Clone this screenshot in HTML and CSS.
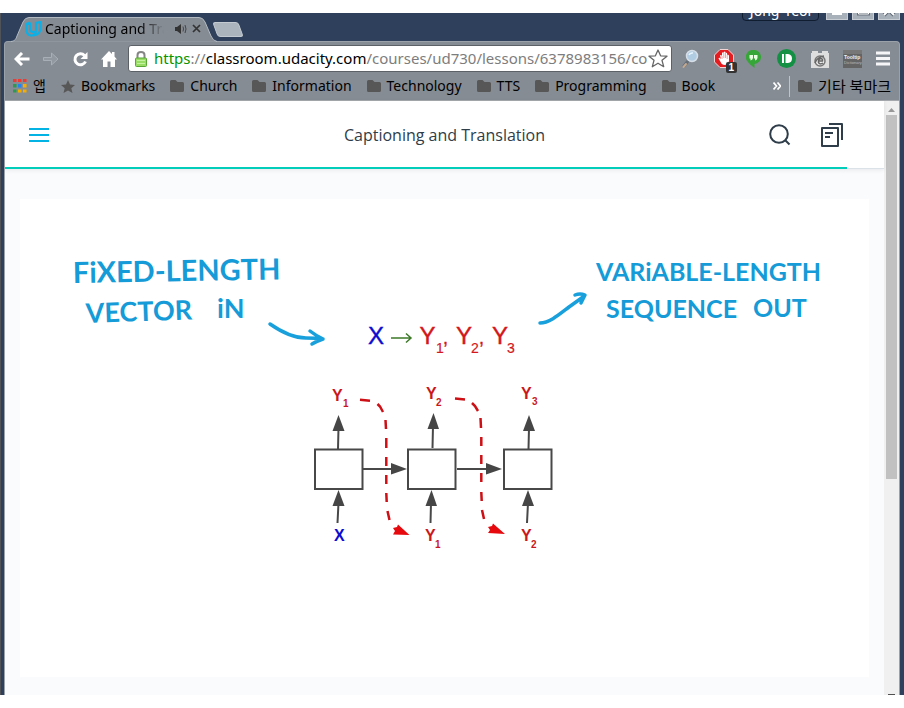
FILE: index.html
```html
<!DOCTYPE html>
<html lang="en">
<head>
<meta charset="utf-8">
<title>Captioning and Translation</title>
<meta name="viewport" content="width=device-width">
<link rel="stylesheet" href="styles.css">
</head>
<body>
<svg class="defs" aria-hidden="true">
  <symbol id="folder" viewBox="0 0 14 12"><path fill="#575757" d="M0 1.5Q0 0 1.500 0H5.500L7.500 2H12.500Q14 2 14 3.500V10.500Q14 12 12.500 12H1.500Q0 12 0 10.500Z"/></symbol>
</svg>
<div class="window">
  <header class="tabstrip">
    <div class="tab">
      <svg class="tab-shape" viewBox="0 0 206 25" aria-hidden="true"><path fill="#868c94" stroke="#b4bac2" d="M0 24.500C4 24 5 22 6 19L12 5Q14 .5 18 .5H188Q192 .5 194 5L200 19Q202 24 206 24.500"/></svg>
      <svg class="favicon" width="17" height="16" viewBox="0 0 17 16" aria-hidden="true"><path fill="none" stroke="#0bb0e6" stroke-width="2.200" d="M5 1.500L1.500 3V9C1.500 13 4 14.800 7 14.500C11 14 11 10 11 8V2L15.500 1V7C15.500 11 13 14 8 14.500M5 1.500V7C5 10.500 7 11.500 10 11"/></svg>
      <span class="tab-title">Captioning and Translation</span>
      <svg width="12" height="10" viewBox="0 0 12 10" aria-hidden="true"><path fill="#333" d="M0 3H2L6 0V10L2 7H0Z"/><path fill="none" stroke="#444" d="M8 2.500Q9 5 8 7.500M10 1Q12 5 10 9"/></svg>
      <button class="plain" aria-label="Close tab"><svg width="9" height="9" viewBox="0 0 9 9"><path stroke="#333" stroke-width="1.700" d="M1 1L8 8M8 1L1 8"/></svg></button>
    </div>
    <button class="new-tab" aria-label="New tab"></button>
    <div class="window-buttons">
      <button class="user">Jong-Yeol</button>
      <button class="wb" aria-label="Minimize"><svg width="20" height="18" viewBox="0 0 20 18"><path stroke="#fff" stroke-width="3" d="M5 12.500H15"/></svg></button>
      <button class="wb" aria-label="Maximize"><svg width="20" height="18" viewBox="0 0 20 18"><path fill="none" stroke="#69727e" stroke-width="3" d="M5.500 4.500H15.500V13H5.500Z"/><path fill="none" stroke="#fff" d="M5.500 4.500H15.500V13H5.500Z"/></svg></button>
      <button class="wb" aria-label="Close"><svg width="20" height="18" viewBox="0 0 20 18"><path stroke="#5e6773" stroke-width="4" d="M5 4L15 14M15 4L5 14"/><path stroke="#fff" stroke-width="2" d="M5 4L15 14M15 4L5 14"/></svg></button>
    </div>
  </header>
  <div class="frame">
    <nav class="toolbar" aria-label="Browser">
      <div class="nav-buttons">
        <button class="plain" aria-label="Back"><svg width="16" height="14" viewBox="0 0 16 14"><path fill="none" stroke="#fff" stroke-width="3" d="M15.500 7H3M8 1L2 7L8 13"/></svg></button>
        <button class="plain" aria-label="Forward"><svg width="16" height="14" viewBox="0 0 16 14"><path fill="#9298a0" stroke="#a9afb6" d="M.5 5.500H8.500V1L15 7L8.500 13V8.500H.5Z"/></svg></button>
        <button class="plain" aria-label="Reload"><svg width="16" height="16" viewBox="0 0 16 16"><path fill="none" stroke="#fff" stroke-width="3" d="M12.500 4.500A5.500 5.500 0 1 0 13.500 10.500"/><path fill="#fff" d="M15.500 1V8H8.500Z"/></svg></button>
        <button class="plain" aria-label="Home"><svg width="16" height="16" viewBox="0 0 16 16"><path fill="#fff" d="M8 0L11 3V1H13.500V5.500L16 8.500H14V16H9.500V10.500H6.500V16H2V8.500H0Z"/></svg></button>
      </div>
      <div class="omnibox">
        <svg width="12" height="16" viewBox="0 0 12 16" aria-hidden="true"><path fill="none" stroke="#858585" stroke-width="2" d="M2.500 8V4Q2.500 1 6 1T9.500 4V8"/><rect x=".5" y="7" width="11" height="8.500" rx="1" fill="#9add66" stroke="#58a636"/><path stroke="#c5f2a0" d="M2 9.500H10M2 12.500H10"/></svg>
        <div class="url"><span class="scheme">https</span>://<span class="host">classroom.udacity.com</span>/courses/ud730/lessons/6378983156/concepts</div>
        <button class="plain" aria-label="Bookmark this page"><svg width="20" height="19" viewBox="0 0 20 19"><path fill="#fff" stroke="#666" stroke-width="1.300" stroke-linejoin="round" d="M10 1L12.600 6.800L19 7.200L14 11.300L15.700 17.700L10 14.200L4.300 17.700L6 11.300L1 7.200L7.400 6.800Z"/></svg></button>
      </div>
      <div class="extensions">
        <button class="plain" aria-label="Search"><svg width="20" height="20" viewBox="0 0 20 20"><path stroke="#656d76" stroke-width="3" stroke-linecap="round" d="M8 12L4 17"/><path stroke="#c4a98f" stroke-width="2" stroke-linecap="round" d="M6 15L3.500 18"/><circle cx="12" cy="7" r="5.500" fill="#b0cce2" stroke="#d5dde6" stroke-width="1.500"/><path fill="none" stroke="#e9f6ff" stroke-width="1.500" d="M9 6Q10 3.500 13 4"/></svg></button>
        <button class="plain blocker" aria-label="Ad blocker"><svg width="24" height="24" viewBox="0 0 24 24"><path fill="#e51c20" stroke="#f1d5d5" d="M6 .5H14L19.500 6V13L14 18.500H6L.5 13V6Z"/><path fill="#fff" d="M6 6.500Q7 5.500 8 7V4Q9 2.500 9.800 4V3Q11 2 11.500 3V4Q13 3 13.200 5V6Q14.800 5 15 7V12Q14 16 10 16Q7 15 6 12L4.500 9.500Q5 8 7 10Z"/><path stroke="#e97c7c" stroke-width=".7" d="M8 7V10M9.800 4V9M11.500 4V9M13.200 6V10"/><rect x="12" y="13" width="11" height="11" rx="2" fill="#333"/><text x="14.500" y="22" class="badge">1</text></svg></button>
        <button class="plain hangouts" aria-label="Hangouts"><svg width="15" height="18" viewBox="0 0 15 18"><path fill="#35a637" d="M7.500 0A7 7 0 0 1 8.500 14V18Q3 13.800 2 12A7 7 0 0 1 7.500 0Z"/><path fill="#e8ffe4" d="M3.500 5H7V8Q6.500 10 4.500 10.500V8.500H3.500ZM8 5H11.500V8Q11 10 9 10.500V8.500H8Z"/></svg></button>
        <button class="plain" aria-label="Pushbullet"><svg width="19" height="19" viewBox="0 0 19 19"><circle cx="9.500" cy="9.500" r="9.500" fill="#149044"/><path fill="#fff" d="M5 5H7V14H5ZM8.500 5H11Q15 5.500 15 9.500T11 14H8.500Z"/></svg></button>
        <button class="plain" aria-label="Capture"><svg width="18" height="18" viewBox="0 0 18 18"><path fill="#dedede" d="M1 1H7V3H11V1H17V3H18V18H0V3H1Z"/><circle cx="9" cy="11" r="5" fill="#eee" stroke="#777" stroke-width="1.500"/><path fill="none" stroke="#666" stroke-width="1.500" d="M12 13Q9 15 7.500 12.500Q7 9 10 8.500Q12 9 11.500 11H7M4 13Q6 7 13 6"/></svg></button>
        <button class="plain" aria-label="Tooltip Dictionary"><svg width="19" height="18" viewBox="0 0 19 18"><path fill="#646464" d="M0 0H19V18H0Z"/><path fill="#777" d="M0 0H19V4H0Z"/><text x="1" y="9" class="tiny" fill="#f2f2f2">Tooltip</text><text x="1" y="14" class="tinier" fill="#bbb">Dictionary</text></svg></button>
        <button class="plain" aria-label="Menu"><svg width="14" height="15" viewBox="0 0 14 15"><path stroke="#f6f6f8" stroke-width="3" d="M0 2H14M0 7.500H14M0 13H14"/></svg></button>
      </div>
    </nav>
    <nav class="bookmarks" aria-label="Bookmarks">
      <a class="apps" href="#"><svg width="14" height="14" viewBox="0 0 14 14"><path fill="#ee3c35" d="M0 0H3.500V3H0ZM5 0H8.500V3H5ZM10 0H13.500V3H10Z"/><path fill="#2c9a50" d="M0 5H3.500V8.500H0ZM0 10.500H3.500V13.500H0Z"/><path fill="#2383ee" d="M5 5H8.500V8.500H5Z"/><path fill="#f5ad00" d="M10 5H13.500V8.500H10ZM5 10.500H8.500V13.500H5ZM10 10.500H13.500V13.500H10Z"/></svg>앱</a>
      <a href="#"><svg width="14" height="13" viewBox="0 0 14 13"><path fill="#575757" d="M7 0L9 4.500L14 5L10.300 8.200L11.500 13L7 10.500L2.500 13L3.700 8.200L0 5L5 4.500Z"/></svg>Bookmarks</a>
      <a href="#"><svg width="14" height="12"><use href="#folder"/></svg>Church</a>
      <a href="#"><svg width="14" height="12"><use href="#folder"/></svg>Information</a>
      <a href="#"><svg width="14" height="12"><use href="#folder"/></svg>Technology</a>
      <a href="#"><svg width="14" height="12"><use href="#folder"/></svg>TTS</a>
      <a href="#"><svg width="14" height="12"><use href="#folder"/></svg>Programming</a>
      <a href="#"><svg width="14" height="12"><use href="#folder"/></svg>Book</a>
      <button class="plain more" aria-label="More bookmarks"><svg width="8" height="8" viewBox="0 0 8 8"><path fill="none" stroke="#fff" stroke-width="1.700" d="M.5 .5L3.500 4L.5 7.500M4.500 .5L7.500 4L4.500 7.500"/></svg></button>
      <a class="other" href="#"><svg width="14" height="12"><use href="#folder"/></svg>기타 북마크</a>
    </nav>
    <div class="viewport">
      <main class="page">
        <header class="lesson-header">
          <button class="plain" aria-label="Open menu"><svg width="20" height="14" viewBox="0 0 20 14"><path stroke="#02b3e4" stroke-width="2" d="M0 1H20M0 7H20M0 13H20"/></svg></button>
          <h1>Captioning and Translation</h1>
          <div class="lesson-tools">
            <button class="plain" aria-label="Search lesson"><svg width="22" height="22" viewBox="0 0 22 22"><circle cx="10" cy="10" r="8.800" fill="none" stroke="#2e3d49" stroke-width="2"/><path stroke="#2e3d49" stroke-width="2" d="M16 16L20.500 20.500"/></svg></button>
            <button class="plain" aria-label="Resources"><svg width="22" height="24" viewBox="0 0 22 24"><path fill="none" stroke="#2e3d49" stroke-width="2" stroke-linejoin="round" d="M1 5H17V23H1ZM8 1H21V17M4 10H12M4 14H9"/></svg></button>
          </div>
          <progress value="95.800" max="100" aria-label="Lesson progress"></progress>
        </header>
        <section class="stage">
          <svg class="slide" viewBox="20 199 849 478" role="img" aria-label="Sequence model diagram">
            <g class="hand">
              <text x="73" y="283" class="wide" transform="rotate(-1 73 283)">FiXED-LENGTH</text>
              <text x="86" y="323" transform="rotate(-2 86 323)">VECTOR</text>
              <text x="217" y="318">iN</text>
              <text x="596" y="281" class="narrow">VARiABLE-LENGTH</text>
              <text x="606" y="318" class="narrow">SEQUENCE</text>
              <text x="753" y="317" class="narrow">OUT</text>
            </g>
            <g class="ink">
              <path d="M270 324C280 331 292 338 306 338Q316 338 323 339M310 331Q315 335 323 339Q317 341 312 344"/>
              <path d="M540 323C550 323 561 313 569 307L583 297M575 295Q580 293 585 295Q583 299 581 303"/>
            </g>
            <g class="formula">
              <text x="368" y="344" class="blue">X</text>
              <path class="green" d="M391 338H411M406 333.500L411 338L406 342.500"/>
              <text x="419.500" y="344">Y</text><text x="436" y="353" class="sub">1</text><text x="443" y="344" class="comma">,</text>
              <text x="456" y="344">Y</text><text x="471" y="353" class="sub">2</text><text x="479" y="344" class="comma">,</text>
              <text x="492" y="344">Y</text><text x="507" y="353" class="sub">3</text>
            </g>
            <g class="boxes">
              <path d="M315 449.500H362.500V489H315ZM408 449.500H455.500V489H408ZM504 449.500H551.500V489H504Z"/>
              <path d="M338 449L338.500 428M432.500 448L433 426M528.500 449L529 428M337.500 523L338.500 503M430.500 523L431 503M527 523L528 503M363 469H393M457 469H488"/>
            </g>
            <path class="heads" d="M338.500 415L344.500 431H332.500ZM433.500 413L439 429H427.500ZM529 415L535 431H523ZM338.500 490L344.500 506H332.500ZM431.500 490L437 506H425.500ZM528 490L534 506H522ZM407 469L391 463V474.500ZM502 469L486 463V474.500Z"/>
            <g class="dashes">
              <path d="M360 399.800L370 400.800M377.500 404L380 406.500L383 412M385.500 420L386 429M386.300 438V448M386.300 457V466M386.300 475V484M386.300 493L386.700 502M387.500 511L389.500 520"/>
              <path d="M455 398.500L465 399.500M472 403L475 406L478 411M480.500 418L481 428M481.300 437V446M481.300 455V464M481.300 473V482M481.300 492L481.700 501M482 510L484 519"/>
            </g>
            <path fill="#e60a0f" d="M398 524.500L409.500 535L393 534.500L395 531L393 528L397 527ZM493 523.500L505 534L488 533L490 530L488 527L492 526Z"/>
            <g class="labels">
              <text x="332" y="401">Y</text><text x="343" y="407" class="mini">1</text>
              <text x="426" y="399">Y</text><text x="436" y="406" class="mini">2</text>
              <text x="521" y="399">Y</text><text x="532" y="405" class="mini">3</text>
              <text x="334" y="541" class="blue">X</text>
              <text x="425" y="541">Y</text><text x="435" y="548" class="mini">1</text>
              <text x="521" y="541">Y</text><text x="531" y="548" class="mini">2</text>
            </g>
          </svg>
        </section>
      </main>
      <div class="scrollbar" aria-hidden="true">
        <svg width="7" height="4" viewBox="0 0 7 4"><path fill="#989898" d="M0 4L3.500 0L7 4Z"/></svg>
        <div class="thumb"></div>
        <div class="arrow-down"></div>
      </div>
    </div>
  </div>
</div>
</body>
</html>
```
FILE: styles.css
```css
* { box-sizing: border-box; }
body {
  margin: 0;
  background: #fff;
  color: #000;
  font: 14px/20px "Noto Sans", "Noto Sans CJK KR", sans-serif;
}
svg { display: block; flex: none; }
.defs { position: absolute; width: 0; height: 0; }
a { color: inherit; text-decoration: none; }
.plain { flex: none; margin: 0; padding: 0; border: 0; background: none; }

.window {
  display: flex;
  flex-direction: column;
  height: calc(100vh - 26px);
  margin: 13px 0;
  overflow: hidden;
  background: #2e405c;
  border-left: 1px solid #505358;
}

/* tabs */
.tabstrip { display: flex; flex: none; height: 28px; padding-left: 10px; }
.tab {
  position: relative;
  z-index: 1;
  display: flex;
  align-items: center;
  width: 206px;
  height: 25px;
  margin-top: 4px;
  padding: 0 14px 2px;
  gap: 3px;
}
.tab-shape { position: absolute; left: 0; top: 0; width: 206px; height: 25px; }
.favicon, .tab-title, .tab > svg, .tab > button { z-index: 1; }
.tab-title {
  width: 119px;
  margin-right: 8px;
  overflow: hidden;
  white-space: nowrap;
  -webkit-mask-image: linear-gradient(90deg, #000 80%, transparent);
  mask-image: linear-gradient(90deg, #000 80%, transparent);
}
.tab > button { margin-left: 2px; }
.new-tab {
  width: 26px;
  height: 15px;
  margin: 9px 0 0 -2px;
  padding: 0;
  border: 1px solid #c4cad1;
  border-radius: 3px;
  background: #abb3bc;
  transform: skewX(20deg);
}
.window-buttons { display: flex; align-items: flex-start; gap: 4px; height: 8px; margin-left: auto; overflow: hidden; padding-right: 4px; }
.user {
  flex: none;
  width: 77px;
  height: 22px;
  margin: -14px 3px 0 0;
  padding: 2px 0 0;
  border: 1px solid #101c30;
  border-radius: 4px;
  background: #2e405c;
  color: #fff;
  font: 14px/18px "Noto Sans", sans-serif;
}
.wb { flex: none; width: 22px; height: 20px; margin-top: -13px; padding: 0; border: 1px solid #c9ced5; background: #a8b0ba; }

/* browser frame */
.frame {
  display: flex;
  flex: 1;
  flex-direction: column;
  min-height: 0;
  margin: 0 4px 0 3px;
  border: solid #9ba1a9;
  border-width: 1px 1px 0;
  border-radius: 4px 4px 0 0;
  background: #868c94;
}
.toolbar { display: flex; align-items: center; flex: none; height: 33px; padding: 0 9px; }
.nav-buttons { display: flex; align-items: center; gap: 13px; width: 114px; }
.omnibox {
  display: flex;
  align-items: center;
  flex: 1;
  min-width: 0;
  height: 27px;
  padding: 0 3px 0 6px;
  border: 1px solid #5c6168;
  border-radius: 3px;
  background: #fff;
}
.url {
  flex: 1;
  min-width: 0;
  margin-left: 7px;
  overflow: hidden;
  color: #7d7d7d;
  font-size: 15px;
  line-height: 22px;
  padding-bottom: 2px;
  white-space: nowrap;
}
.scheme { color: #079500; }
.host { color: #000; }
.extensions { display: flex; align-items: center; justify-content: space-between; width: 218px; padding-left: 8px; }
.blocker { margin: 5px -6px 0 0; }
.hangouts { margin-right: 2px; }
.badge { fill: #fff; font: bold 10px "Liberation Sans", sans-serif; }
.tiny { font: bold 5px "Liberation Sans", sans-serif; }
.tinier { font: 4px "Liberation Sans", sans-serif; }

.bookmarks {
  display: flex;
  align-items: center;
  flex: none;
  height: 26px;
  padding: 0 8px 3px;
  gap: 15px;
  border-bottom: 1px solid #a5a8ac;
  white-space: nowrap;
}
.bookmarks a { display: flex; align-items: center; gap: 6px; }
.more { margin: 0 -7px 0 auto; }
.bookmarks .other { height: 21px; padding-left: 8px; border-left: 1px solid #bfc4ca; font-size: 15px; }

/* web page */
.viewport { display: flex; flex: 1; min-height: 0; background: #fff; }
.page { display: flex; flex: 1; flex-direction: column; min-width: 0; background: #fafbfd; }
.lesson-header {
  position: relative;
  display: grid;
  grid-template-columns: 91px 1fr 74px;
  align-items: center;
  flex: none;
  height: 68px;
  padding: 0 41px 0 24px;
  border-bottom: 1px solid #dbe2e8;
  background: #fff;
  box-shadow: 0 1px 4px rgba(46, 61, 73, .1);
}
h1 { margin: 0; color: #2e3d49; font: 400 16px/24px "Open Sans", sans-serif; text-align: center; }
.lesson-header > button { justify-self: start; }
.lesson-tools { display: flex; align-items: center; justify-content: space-between; }
progress {
  position: absolute;
  left: 0;
  bottom: -1px;
  width: 100%;
  height: 2px;
  border: 0;
  appearance: none;
  background: transparent;
}
progress::-webkit-progress-bar { background: transparent; }
progress::-webkit-progress-value { background: #02ccba; }
.stage { flex: 1; min-height: 0; padding: 30px 15px 18px; }
.slide { width: 100%; height: auto; background: #fff; }

.hand { fill: #159bd7; font: 700 27px Lato, sans-serif; }
.hand .wide { font-size: 29px; }
.hand .narrow { font-size: 25px; }
.ink { fill: none; stroke: #18a0dc; stroke-width: 3.500; stroke-linecap: round; stroke-linejoin: round; }
.formula { fill: #d3181c; stroke: #d3181c; stroke-width: .4; font: 24px "Liberation Sans", sans-serif; }
.formula .sub { font-size: 14px; stroke-width: .2; }
.formula .comma { font-size: 18px; }
.blue { fill: #0c0cd0; }
.formula .blue { stroke: #0c0cd0; }
.formula .green { fill: none; stroke: #3d7a28; stroke-width: 1.500; }
.boxes { fill: #fff; stroke: #484848; stroke-width: 2; }
.heads { fill: #464646; }
.dashes { fill: none; stroke: #cc1015; stroke-width: 2.500; }
.labels { fill: #ca171b; font: bold 16px "Liberation Sans", sans-serif; }
.labels .blue { fill: #0c0cd0; }
.labels .mini { font-size: 10px; }

.scrollbar { display: flex; flex-direction: column; align-items: center; flex: none; width: 15px; padding-top: 7px; background: #f0f0f0; }
.thumb { width: 11px; height: 62%; margin-top: 3px; background: #c1c1c1; }
.arrow-down { width: 7px; height: 1px; margin-top: auto; background: #505050; }
```
